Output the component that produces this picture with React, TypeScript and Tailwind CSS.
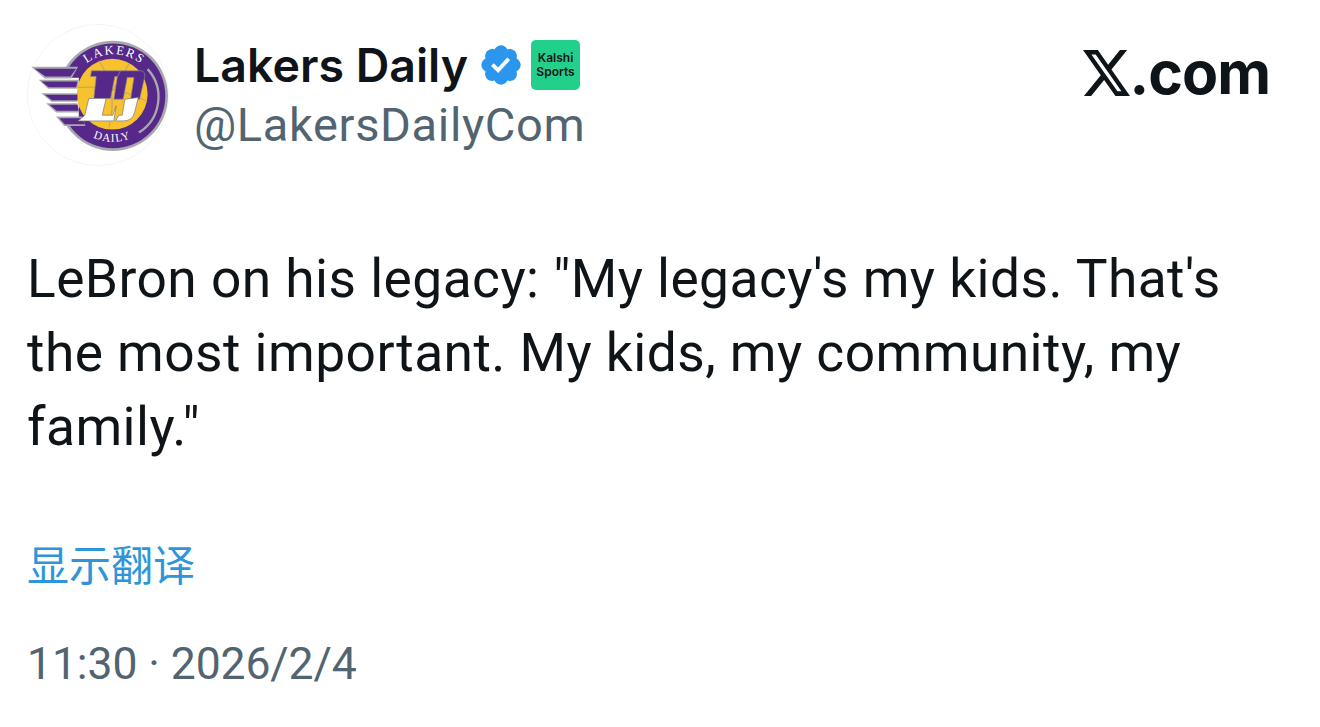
const purple = "#55288a";
const silver = "#a9a8ab";

// wing stripes, in the logo's own coordinates
const stripes = [
  { outer: "38,153 178,153 158,188 78,188", inner: "48,159 172,159 155,182 80,182" },
  { outer: "60,192 180,192 176,219 88,219", inner: "68,197 176,197 172,214 90,214" },
  { outer: "68,232 176,232 176,258 98,258", inner: "78,237 176,237 176,253 100,253" },
  { outer: "82,262 176,262 180,290 112,290", inner: "92,267 176,267 180,285 114,285" },
  { outer: "112,302 190,302 200,330 136,330", inner: "122,307 190,307 198,325 138,325" },
];

function LakersLogo() {
  return (
    <svg viewBox="25 25 425 425" className="w-[142px] h-[142px] shrink-0">
      <circle cx="237.5" cy="237.5" r="211" fill="#ffffff" stroke="#efefef" strokeWidth="2" />
      <circle cx="282" cy="240" r="165" fill={silver} />
      <circle cx="282" cy="240" r="157" fill={purple} />
      <rect x="100" y="186" width="80" height="118" fill="#ffffff" />
      <circle cx="280" cy="235" r="106" fill="#f7c22e" />
      {stripes.map((s) => (
        <g key={s.outer}>
          <polygon points={s.outer} fill={silver} />
          <polygon points={s.inner} fill={purple} />
        </g>
      ))}
      <path d="M178 215 Q280 205 382 255 M240 135 Q300 220 270 335 M330 145 Q280 240 200 310" fill="none" stroke="#b9a46a" strokeWidth="3" />
      <path d="M386 160 A125 125 0 0 1 360 350" fill="none" stroke={silver} strokeWidth="7" />
      <defs>
        <path id="arc-top" d="M180 168 A128 128 0 0 1 390 172" />
        <path id="arc-bottom" d="M192 345 A140 140 0 0 0 368 348" />
      </defs>
      <text fontSize="38" fill="#ffffff" letterSpacing="5" style={{ fontFamily: '"Liberation Serif", serif' }}>
        <textPath href="#arc-top" startOffset="50%" textAnchor="middle">LAKERS</textPath>
      </text>
      <text fontSize="34" fill="#ffffff" letterSpacing="3" style={{ fontFamily: '"Liberation Serif", serif' }}>
        <textPath href="#arc-bottom" startOffset="50%" textAnchor="middle">DAILY</textPath>
      </text>
      {/* LD monogram, purple top half and white bottom half */}
      <path d="M218 165 L305 165 L300 182 L288 182 L275 248 L225 248 L232 182 L215 182 Z" fill={purple} stroke="#8f8f92" strokeWidth="2" />
      <path d="M305 165 L365 165 Q380 165 377 185 L362 250 L335 250 L345 185 L325 185 L313 250 L285 250 L295 185 Z" fill={purple} stroke="#8f8f92" strokeWidth="2" />
      <path d="M210 248 L262 248 L250 298 L282 298 L292 270 L285 315 L178 315 L198 298 Z" fill="#ffffff" stroke="#77757c" strokeWidth="2" />
      <path d="M318 250 L358 245 L347 290 Q340 315 315 315 L290 315 L300 298 L310 298 Z" fill="#ffffff" stroke="#77757c" strokeWidth="2" />
    </svg>
  );
}

function VerifiedBadge() {
  return (
    <svg viewBox="0 0 22 22" className="w-[46px] h-[46px] shrink-0">
      <path
        fill="#2b96ee"
        d="M20.396 11c-.018-.646-.215-1.275-.57-1.816-.354-.54-.852-.972-1.438-1.246.223-.607.27-1.264.14-1.897-.131-.634-.437-1.218-.882-1.687-.47-.445-1.053-.75-1.687-.882-.633-.13-1.29-.083-1.897.14-.273-.587-.704-1.086-1.245-1.44S11.647 1.62 11 1.604c-.646.017-1.273.213-1.813.568s-.969.854-1.24 1.44c-.608-.223-1.267-.272-1.902-.14-.635.13-1.22.436-1.69.882-.445.47-.749 1.055-.878 1.688-.13.633-.08 1.29.144 1.896-.587.274-1.087.705-1.443 1.245-.356.54-.555 1.17-.574 1.817.02.647.218 1.276.574 1.817.356.54.856.972 1.443 1.245-.224.606-.274 1.263-.144 1.896.13.634.433 1.218.877 1.688.47.443 1.054.747 1.687.878.633.132 1.29.084 1.897-.136.274.586.705 1.084 1.246 1.439.54.354 1.17.551 1.816.569.647-.016 1.276-.213 1.817-.567s.972-.854 1.245-1.44c.604.239 1.266.296 1.903.164.636-.132 1.22-.447 1.68-.907.46-.46.776-1.044.908-1.681s.075-1.299-.165-1.903c.586-.274 1.084-.705 1.439-1.246.354-.54.551-1.17.569-1.816z"
      />
      <path fill="#ffffff" d="M9.662 14.85l-3.429-3.428 1.293-1.302 2.072 2.072 4.4-4.794 1.347 1.246z" />
    </svg>
  );
}

export default function App() {
  return (
    <div
      className="w-[1320px] h-[727px] bg-white overflow-hidden pl-[27px] pr-[50px] pt-[24px] text-[#0f1419]"
      style={{ fontFamily: 'Roboto, "Noto Sans CJK SC", sans-serif' }}
    >
      <header className="flex items-start">
        <LakersLogo />
        <div className="ml-[25px] flex flex-col pt-[10px]">
          <div className="flex items-center h-[62px]">
            <span className="text-[46.5px] font-semibold leading-none whitespace-nowrap" style={{ fontFamily: "Inter, sans-serif" }}>Lakers Daily</span>
            <span className="ml-[10px]"><VerifiedBadge /></span>
            <span className="ml-[7px] w-[49px] h-[50px] rounded-[5px] bg-[#22d08b] flex flex-col items-center justify-center text-[12px] font-semibold leading-[14px]" style={{ fontFamily: "Inter, sans-serif" }}>
              <span>Kalshi</span>
              <span>Sports</span>
            </span>
          </div>
          <div className="text-[47px] leading-[54px] mt-[2px] text-[#536471] whitespace-nowrap tracking-[0.65px]">@LakersDailyCom</div>
        </div>
        <div className="ml-auto mt-[19px] flex items-end">
          <svg viewBox="1.25 2.25 21.6 19.5" preserveAspectRatio="none" className="w-[47px] h-[46px] mb-[6px]" fill="#0f1419">
            <path d="M18.244 2.25h3.308l-7.227 8.26 8.502 11.24H16.17l-5.214-6.817L4.99 21.75H1.68l7.73-8.835L1.254 2.25H8.08l4.713 6.231zm-1.161 17.52h1.833L7.084 4.126H5.117z" />
          </svg>
          <span className="text-[59px] font-bold leading-none tracking-[-1px]" style={{ fontFamily: "Inter, sans-serif" }}>.com</span>
        </div>
      </header>

      <p className="mt-[76px] w-[1230px] text-[53.3px] leading-[74px] tracking-[0.45px]">
        LeBron on his legacy: "My legacy's my kids. That's the most important. My kids, my community, my family."
      </p>

      <a className="block mt-[78px] text-[42px] leading-[50px] text-[#2e96d8]">显示翻译</a>

      <div className="mt-[45px] text-[44.5px] leading-[54px] text-[#536471] tracking-[-0.1px]">11:30 · 2026/2/4</div>
    </div>
  );
}
